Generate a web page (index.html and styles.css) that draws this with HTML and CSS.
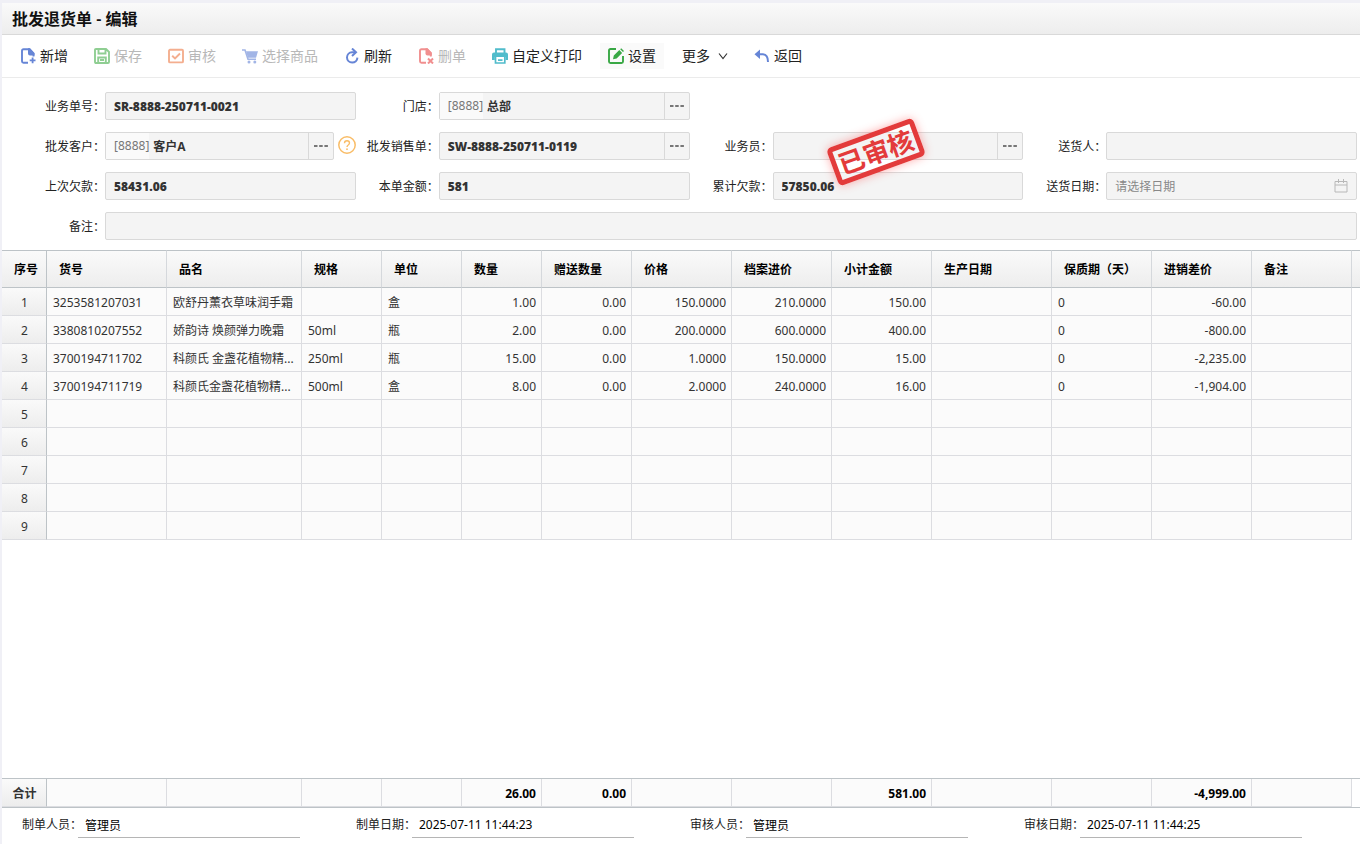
FILE: index.html
```html
<!DOCTYPE html>
<html lang="zh-CN">
<head>
<meta charset="utf-8">
<title>批发退货单 - 编辑</title>
<link rel="stylesheet" href="styles.css">
</head>
<body>
<div class="page">
  <header class="titlebar"><h1>批发退货单 - 编辑</h1></header>

  <div class="toolbar">
    <button class="tool" type="button">
      <svg class="icon blue" viewBox="0 0 16 16"><path d="M8 14.800H3.500Q2 14.800 2 13.300V2.700Q2 1.200 3.500 1.200H9.500L13.500 5.500V8.500" fill="none" stroke="currentColor" stroke-width="1.900"/><path d="M8 0.300H10L14.500 5V7.500H10Q8 7.500 8 5.500ZM11.700 9.500h1.800v2h2v1.800h-2v2h-1.800v-2h-2v-1.800h2Z" fill="currentColor"/></svg>
      <span>新增</span>
    </button>
    <button class="tool" type="button" disabled>
      <svg class="icon green" viewBox="0 0 16 16"><path d="M2 1H12L15 4V14Q15 15 14 15H2Q1 15 1 14V2Q1 1 2 1ZM4.500 1V5.500H11.500V1M4.200 15V9.500H11.800V15M6 12H10" fill="none" stroke="currentColor" stroke-width="1.900"/></svg>
      <span>保存</span>
    </button>
    <button class="tool" type="button" disabled>
      <svg class="icon orange" viewBox="0 0 16 16"><rect x="1" y="1.800" width="14" height="12.600" rx="1" fill="none" stroke="currentColor" stroke-width="1.900"/><path d="M4.200 7.800 7 10.500 12 5.500" fill="none" stroke="currentColor" stroke-width="1.900"/></svg>
      <span>审核</span>
    </button>
    <button class="tool" type="button" disabled>
      <svg class="icon blue" viewBox="0 0 16 16"><path d="M0 2H3L6 11.300H14" fill="none" stroke="currentColor" stroke-width="1.600"/><path d="M4 3.200H16L14 9.800H6Z" fill="currentColor"/><circle cx="7" cy="14" r="1.500" fill="currentColor"/><circle cx="12.800" cy="14" r="1.500" fill="currentColor"/></svg>
      <span>选择商品</span>
    </button>
    <button class="tool" type="button">
      <svg class="icon blue" viewBox="0 0 16 16"><path d="M11.500 4.200H8A5.200 5.200 0 1 0 13.400 9.600" fill="none" stroke="currentColor" stroke-width="2"/><path d="M8 0.500 12 4.200 8 8" fill="none" stroke="currentColor" stroke-width="2"/></svg>
      <span>刷新</span>
    </button>
    <button class="tool" type="button" disabled>
      <svg class="icon red" viewBox="0 0 16 16"><path d="M8 14.800H3.500Q2 14.800 2 13.300V2.700Q2 1.200 3.500 1.200H9L12.800 5V8.500" fill="none" stroke="currentColor" stroke-width="1.900"/><path d="M7.500 0.300H9.500L13.800 5V7.500H9.500Q7.500 7.500 7.500 5.500Z" fill="currentColor"/><path d="M10 10.500 15 15.500M15 10.500 10 15.500" stroke="currentColor" stroke-width="2"/></svg>
      <span>删单</span>
    </button>
    <button class="tool" type="button">
      <svg class="icon teal" viewBox="0 0 16 16"><path d="M4 5V1.200H12.500V5" fill="none" stroke="currentColor" stroke-width="1.900"/><path d="M2 4.500H14Q16 4.500 16 6.500V12H13.500V9H2.800V12H0V6.500Q0 4.500 2 4.500Z" fill="currentColor"/><path d="M3.500 9V15H12.800V9M6 12.200H10.500" fill="none" stroke="currentColor" stroke-width="1.700"/></svg>
      <span>自定义打印</span>
    </button>
    <button class="tool active" type="button">
      <svg class="icon leaf" viewBox="0 0 16 16"><path d="M8 1H2.500Q1 1 1 2.500V13.500Q1 15 2.500 15H13.500Q15 15 15 13.500V8" fill="none" stroke="currentColor" stroke-width="1.900"/><path d="M5 11.300 5.800 7.600 11.300 2.100 14.100 4.900 8.600 10.500ZM12.200 1.200 13.200 0.300 16 3 15 4Z" fill="currentColor"/></svg>
      <span>设置</span>
    </button>
    <button class="tool more" type="button">
      <span>更多</span>
      <svg class="chevron" viewBox="0 0 10 10"><path d="M1 2.500 5 7.500 9 2.500" fill="none" stroke="currentColor" stroke-width="1.200"/></svg>
    </button>
    <button class="tool" type="button">
      <svg class="icon blue" viewBox="0 0 16 16"><path d="M0.500 6.200 6 1.500V11Z" fill="currentColor"/><path d="M5 6.200H9Q14 6.500 14 14" fill="none" stroke="currentColor" stroke-width="2"/></svg>
      <span>返回</span>
    </button>
  </div>

  <form class="form">
    <div class="field">
      <label for="no">业务单号：</label>
      <div class="box"><input id="no" value="SR-8888-250711-0021" readonly></div>
    </div>
    <div class="field break">
      <label for="store">门店：</label>
      <div class="box"><span class="code">[8888]</span><input id="store" class="after" value="总部" readonly><button class="dots" type="button" aria-label="选择门店"><svg viewBox="0 0 14 4"><path d="M0 2H14" class="dash"/></svg></button></div>
    </div>
    <div class="field">
      <label for="cust">批发客户：</label>
      <div class="box"><span class="code">[8888]</span><input id="cust" class="after" value="客户A" readonly><button class="dots" type="button" aria-label="选择客户"><svg viewBox="0 0 14 4"><path d="M0 2H14" class="dash"/></svg></button></div>
      <button class="help" type="button" aria-label="帮助"><svg viewBox="0 0 18 18"><circle cx="9" cy="9" r="8.200" fill="none" stroke="currentColor" stroke-width="1.500"/><path d="M6.500 7.200Q6.500 4.800 9 4.800Q11.500 4.800 11.500 7Q11.500 8 10.200 9Q9 9.800 9 11" fill="none" stroke="currentColor" stroke-width="1.400"/><circle cx="9" cy="13.200" r="0.900" fill="currentColor"/></svg></button>
    </div>
    <div class="field">
      <label for="sale">批发销售单：</label>
      <div class="box"><input id="sale" value="SW-8888-250711-0119" readonly><button class="dots" type="button" aria-label="选择销售单"><svg viewBox="0 0 14 4"><path d="M0 2H14" class="dash"/></svg></button></div>
    </div>
    <div class="field stamped">
      <label for="clerk">业务员：</label>
      <div class="box"><input id="clerk" readonly><button class="dots" type="button" aria-label="选择业务员"><svg viewBox="0 0 14 4"><path d="M0 2H14" class="dash"/></svg></button></div>
      <div class="stamp">已审核</div>
    </div>
    <div class="field">
      <label for="courier">送货人：</label>
      <div class="box"><input id="courier" readonly></div>
    </div>
    <div class="field">
      <label for="prev">上次欠款：</label>
      <div class="box"><input id="prev" value="58431.06" readonly></div>
    </div>
    <div class="field">
      <label for="amount">本单金额：</label>
      <div class="box"><input id="amount" value="581" readonly></div>
    </div>
    <div class="field">
      <label for="debt">累计欠款：</label>
      <div class="box"><input id="debt" value="57850.06" readonly></div>
    </div>
    <div class="field">
      <label for="date">送货日期：</label>
      <div class="box"><input id="date" placeholder="请选择日期" readonly><svg class="calendar" viewBox="0 0 14 14"><path d="M1 2.500H13V13H1ZM1 6H13M4.500 0V4M9.500 0V4" fill="none" stroke="currentColor"/></svg></div>
    </div>
    <div class="field wide">
      <label for="memo">备注：</label>
      <div class="box"><input id="memo" readonly></div>
    </div>
  </form>

  <main class="grid-area">
    <table class="grid">
      <colgroup><col class="w45"><col class="w120"><col class="w135"><col class="w80"><col class="w80"><col class="w80"><col class="w90"><col class="w100"><col class="w100"><col class="w100"><col class="w120"><col class="w100"><col class="w100"><col class="w100"><col></colgroup>
      <thead>
        <tr><th>序号</th><th>货号</th><th>品名</th><th>规格</th><th>单位</th><th>数量</th><th>赠送数量</th><th>价格</th><th>档案进价</th><th>小计金额</th><th>生产日期</th><th>保质期（天）</th><th>进销差价</th><th>备注</th><th></th></tr>
      </thead>
      <tbody>
        <tr><td>1</td><td>3253581207031</td><td>欧舒丹薰衣草味润手霜</td><td></td><td>盒</td><td class="num">1.00</td><td class="num">0.00</td><td class="num">150.0000</td><td class="num">210.0000</td><td class="num">150.00</td><td></td><td>0</td><td class="num">-60.00</td><td></td><td></td></tr>
        <tr><td>2</td><td>3380810207552</td><td>娇韵诗 焕颜弹力晚霜</td><td>50ml</td><td>瓶</td><td class="num">2.00</td><td class="num">0.00</td><td class="num">200.0000</td><td class="num">600.0000</td><td class="num">400.00</td><td></td><td>0</td><td class="num">-800.00</td><td></td><td></td></tr>
        <tr><td>3</td><td>3700194711702</td><td>科颜氏 金盏花植物精...</td><td>250ml</td><td>瓶</td><td class="num">15.00</td><td class="num">0.00</td><td class="num">1.0000</td><td class="num">150.0000</td><td class="num">15.00</td><td></td><td>0</td><td class="num">-2,235.00</td><td></td><td></td></tr>
        <tr><td>4</td><td>3700194711719</td><td>科颜氏金盏花植物精...</td><td>500ml</td><td>盒</td><td class="num">8.00</td><td class="num">0.00</td><td class="num">2.0000</td><td class="num">240.0000</td><td class="num">16.00</td><td></td><td>0</td><td class="num">-1,904.00</td><td></td><td></td></tr>
        <tr><td>5</td><td></td><td></td><td></td><td></td><td></td><td></td><td></td><td></td><td></td><td></td><td></td><td></td><td></td><td></td></tr>
        <tr><td>6</td><td></td><td></td><td></td><td></td><td></td><td></td><td></td><td></td><td></td><td></td><td></td><td></td><td></td><td></td></tr>
        <tr><td>7</td><td></td><td></td><td></td><td></td><td></td><td></td><td></td><td></td><td></td><td></td><td></td><td></td><td></td><td></td></tr>
        <tr><td>8</td><td></td><td></td><td></td><td></td><td></td><td></td><td></td><td></td><td></td><td></td><td></td><td></td><td></td><td></td></tr>
        <tr><td>9</td><td></td><td></td><td></td><td></td><td></td><td></td><td></td><td></td><td></td><td></td><td></td><td></td><td></td><td></td></tr>
      </tbody>
    </table>
  </main>

  <div class="totals">
    <table class="grid">
      <colgroup><col class="w45"><col class="w120"><col class="w135"><col class="w80"><col class="w80"><col class="w80"><col class="w90"><col class="w100"><col class="w100"><col class="w100"><col class="w120"><col class="w100"><col class="w100"><col class="w100"><col></colgroup>
      <tbody>
        <tr><td>合计</td><td></td><td></td><td></td><td></td><td class="num">26.00</td><td class="num">0.00</td><td></td><td></td><td class="num">581.00</td><td></td><td></td><td class="num">-4,999.00</td><td></td><td></td></tr>
      </tbody>
    </table>
  </div>

  <footer class="footer">
    <div class="sign"><label for="maker">制单人员：</label><input id="maker" value="管理员" readonly></div>
    <div class="sign"><label for="made">制单日期：</label><input id="made" value="2025-07-11 11:44:23" readonly></div>
    <div class="sign"><label for="auditor">审核人员：</label><input id="auditor" value="管理员" readonly></div>
    <div class="sign"><label for="audited">审核日期：</label><input id="audited" value="2025-07-11 11:44:25" readonly></div>
  </footer>
</div>
</body>
</html>
```
FILE: styles.css
```css
* { box-sizing: border-box; }

body {
  margin: 0;
  padding: 3px 0 0 2px;
  background: #f0f0f6;
  color: #222;
  font: 12px/18px "Noto Sans", "Noto Sans CJK SC", sans-serif;
}

button, input {
  margin: 0;
  padding: 0;
  border: 0;
  background: none;
  color: inherit;
  font: inherit;
}

.page {
  display: flex;
  flex-direction: column;
  min-height: calc(100vh - 3px);
  background: #fff;
}

.titlebar {
  display: flex;
  align-items: center;
  height: 32px;
  padding: 0 10px;
  border-bottom: 1px solid #d9d9d9;
  background: linear-gradient(#fafafa, #ededed);
}

.titlebar h1 {
  margin: 0;
  color: #111;
  font-size: 16px;
  line-height: 24px;
  font-weight: 600;
}

/* Toolbar */
.toolbar {
  display: flex;
  align-items: center;
  gap: 10px;
  height: 43px;
  padding: 0 10px;
  border-bottom: 1px solid #ebebeb;
}

.tool {
  display: flex;
  align-items: center;
  gap: 4px;
  height: 26px;
  padding: 0 8px;
  font-size: 14px;
  line-height: 20px;
  white-space: nowrap;
}

.tool.active { background: #fafafa; }
.tool.more { gap: 8px; }
.tool:disabled span { color: #b8b8b8; }
.tool:disabled .icon { opacity: 0.6; }

.icon { width: 16px; height: 16px; }
.chevron { width: 10px; height: 10px; color: #333; }
.blue { color: #6685d6; }
.green { color: #46af4b; }
.orange { color: #ee7a46; }
.red { color: #e84646; }
.teal { color: #50bccb; }
.leaf { color: #39a845; }

/* Document form */
.form {
  display: grid;
  grid-template-columns: repeat(4, 1fr);
  row-gap: 12px;
  padding: 14px 3px 10px 20px;
}

.field {
  display: flex;
  align-items: center;
  min-width: 0;
}

.field.break { grid-column: 2 / span 3; width: calc(100% / 3); }
.field.wide { grid-column: 1 / -1; }
.field.stamped { position: relative; }

.field label {
  flex: 0 0 83px;
  padding-top: 2px;
  text-align: right;
  white-space: nowrap;
}

.box {
  display: flex;
  flex: 1;
  align-items: center;
  min-width: 0;
  height: 28px;
  border: 1px solid #d9d9d9;
  border-radius: 2px;
  background: #f4f4f4;
}

.box input {
  flex: 1;
  min-width: 0;
  height: 26px;
  padding: 0 8px;
  color: #333;
  font-family: "Open Sans", "Noto Sans CJK SC", sans-serif;
  font-weight: 800;
}

.box input.after {
  padding-left: 4px;
  font-weight: 700;
}

.box input::placeholder {
  color: #888;
  font-weight: 400;
  opacity: 1;
}

.code {
  height: 26px;
  padding-left: 8px;
  background: #fafafa;
  color: #777;
  line-height: 26px;
}

.dots {
  display: flex;
  align-items: center;
  justify-content: center;
  width: 25px;
  height: 26px;
  border-left: 1px solid #d9d9d9;
}

.dots svg { width: 14px; height: 4px; }
.dash { stroke: #777; stroke-width: 2; stroke-dasharray: 4 1; stroke-dasharray: 3.500 1.700; }

.help {
  width: 18px;
  height: 18px;
  margin: 0 0 2px 4px;
  color: #f9bd68;
}

.help svg { display: block; }

.calendar {
  width: 14px;
  height: 14px;
  margin-right: 8px;
  color: #b8b8b8;
}

.stamp {
  position: absolute;
  top: 0;
  left: 140px;
  width: 92px;
  height: 40px;
  border: 5px solid #e33b3b;
  border-radius: 5px;
  box-shadow: 0 0 10px rgba(255, 70, 70, 0.45);
  color: #e33b3b;
  font-size: 26px;
  line-height: 30px;
  font-weight: 700;
  text-align: center;
  white-space: nowrap;
  transform: rotate(-20deg);
}

/* Line items */
.grid-area { flex: 1; }

.grid {
  width: 100%;
  table-layout: fixed;
  border-collapse: separate;
  border-spacing: 0;
}

.w45 { width: 45px; }
.w80 { width: 80px; }
.w90 { width: 90px; }
.w100 { width: 100px; }
.w120 { width: 120px; }
.w135 { width: 135px; }

.grid th {
  height: 38px;
  padding: 2px 0 0 12px;
  border: solid #bdc3c7;
  border-width: 1px 0;
  border-right: 1px solid #d5d8dc;
  background: linear-gradient(#fafafa, #ededed);
  color: #000;
  text-align: left;
  white-space: nowrap;
}

.grid td {
  height: 28px;
  padding: 2px 5px 0 6px;
  border: solid #dcdde1;
  border-width: 0 1px 1px 0;
  background: #fbfbfb;
  color: #333;
  white-space: nowrap;
}

.grid td:first-child {
  border-right-color: #bdc3c7;
  background: linear-gradient(#fafafa, #ededed);
  text-align: center;
}

.grid th:first-child { border-right-color: #bdc3c7; }
.grid th:last-child { border-right: 0; }

.grid td:last-child {
  padding: 0;
  border: 0;
  background: #fff;
}

.grid .num { text-align: right; }

.totals {
  border: solid #bdc3c7;
  border-width: 1px 0;
}

.totals td {
  color: #000;
  font-weight: 700;
}

.totals td:first-child { color: #333; }

/* Signatures */
.footer {
  display: grid;
  grid-template-columns: repeat(4, 1fr);
  height: 36px;
  padding: 4px 2px 6px 20px;
}

.sign { display: flex; align-items: center; }

.sign label {
  flex: 0 0 56px;
  width: 56px;
  min-width: 0;
  white-space: nowrap;
}

.sign input {
  flex: 0 0 222px;
  min-width: 0;
  height: 26px;
  padding: 0 7px;
  border-bottom: 1px solid #b5b5b5;
  color: #000;
}
```
